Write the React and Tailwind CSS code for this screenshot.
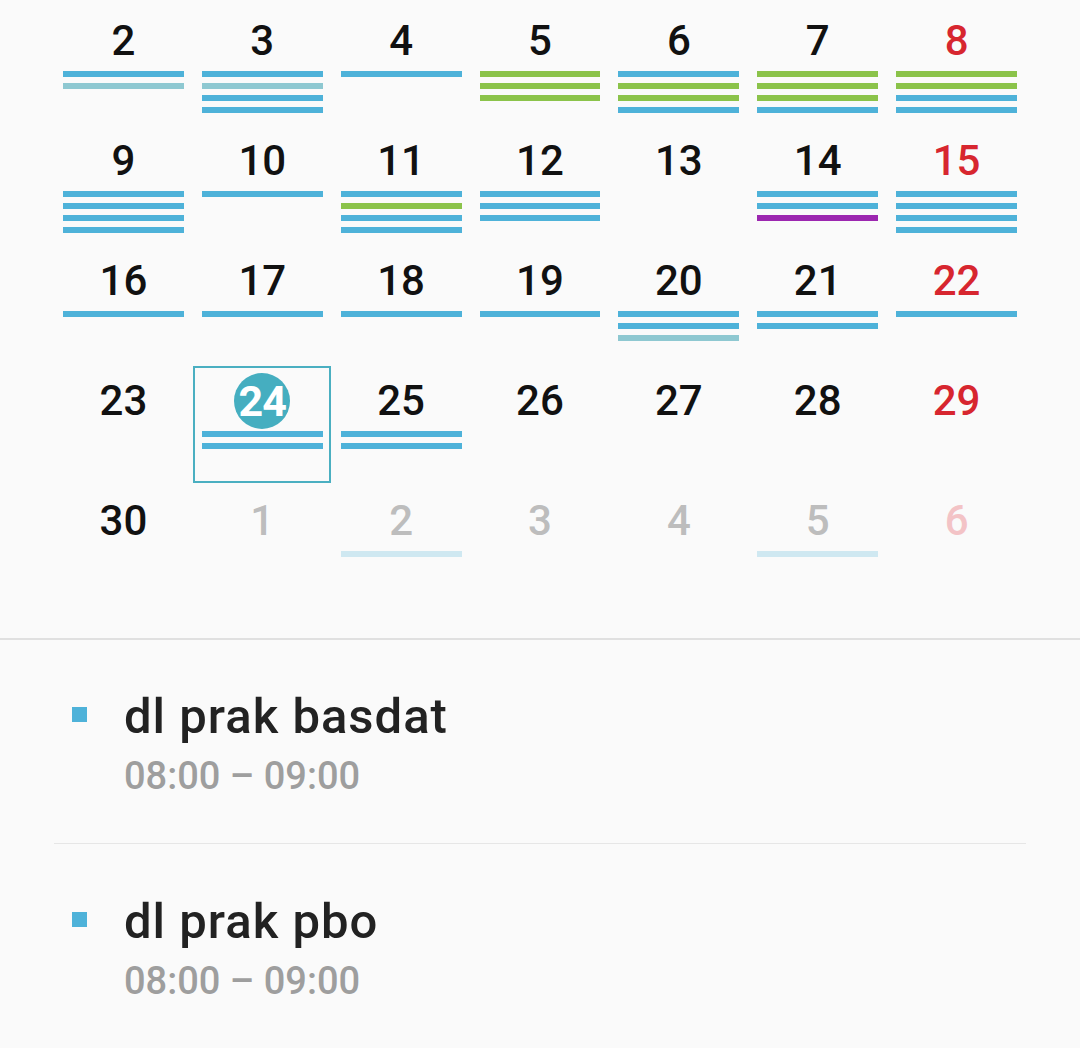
import React from "react";

const B = "bg-[#4eb2d9]";
const T = "bg-[#8ec8d1]";
const G = "bg-[#8bc34a]";
const P = "bg-[#9c27b0]";
const F = "bg-[#cfe8f1]";

const rows = [
  [
    { d: 2, bars: [B, T] },
    { d: 3, bars: [B, T, B, B] },
    { d: 4, bars: [B] },
    { d: 5, bars: [G, G, G] },
    { d: 6, bars: [B, G, G, B] },
    { d: 7, bars: [G, G, G, B] },
    { d: 8, bars: [G, G, B, B], red: true },
  ],
  [
    { d: 9, bars: [B, B, B, B] },
    { d: 10, bars: [B] },
    { d: 11, bars: [B, G, B, B] },
    { d: 12, bars: [B, B, B] },
    { d: 13, bars: [] },
    { d: 14, bars: [B, B, P] },
    { d: 15, bars: [B, B, B, B], red: true },
  ],
  [
    { d: 16, bars: [B] },
    { d: 17, bars: [B] },
    { d: 18, bars: [B] },
    { d: 19, bars: [B] },
    { d: 20, bars: [B, B, T] },
    { d: 21, bars: [B, B] },
    { d: 22, bars: [B], red: true },
  ],
  [
    { d: 23, bars: [] },
    { d: 24, bars: [B, B], selected: true },
    { d: 25, bars: [B, B] },
    { d: 26, bars: [] },
    { d: 27, bars: [] },
    { d: 28, bars: [] },
    { d: 29, bars: [], red: true },
  ],
  [
    { d: 30, bars: [] },
    { d: 1, bars: [], dim: true },
    { d: 2, bars: [F], dim: true },
    { d: 3, bars: [], dim: true },
    { d: 4, bars: [], dim: true },
    { d: 5, bars: [F], dim: true },
    { d: 6, bars: [], dim: true, red: true },
  ],
];

function Cell({ c }) {
  let color = "text-[#111111]";
  if (c.red && c.dim) color = "text-[#f3c3c6]";
  else if (c.red) color = "text-[#d7262f]";
  else if (c.dim) color = "text-[#bdbdbd]";
  return (
    <div className="relative h-[120px] flex flex-col items-center">
      {c.selected && (
        <div className="absolute top-[1px] left-0 right-[1px] h-[117px] border-2 border-[#4aafc1]" />
      )}
      <div className="mt-[11px] h-[50px] flex items-center justify-center">
        {c.selected ? (
          <div className="w-[56px] h-[56px] rounded-full bg-[#45aec0] flex items-center justify-center text-white text-[43px] font-bold leading-none tracking-[-1px]">
            {c.d}
          </div>
        ) : (
          <span className={`text-[42px] font-medium leading-none ${color}`}>{c.d}</span>
        )}
      </div>
      <div className="mt-[5px] w-full px-[9px] flex flex-col gap-[6px] relative">
        {c.bars.map((b, i) => (
          <div key={i} className={`h-[6px] w-full ${b}`} />
        ))}
      </div>
    </div>
  );
}

function Event({ title, time }) {
  return (
    <div className="flex items-start">
      <div className="w-[72px] shrink-0" />
      <div className="w-[15px] h-[15px] bg-[#4eb2d9] mt-[18px] shrink-0" />
      <div className="ml-[37px] flex flex-col">
        <div className="text-[49px] leading-[56px] font-medium tracking-[1px] text-[#222222]">{title}</div>
        <div className="mt-[7px] text-[38px] leading-[48px] font-medium text-[#9e9e9e]">{time}</div>
      </div>
    </div>
  );
}

export default function App() {
  return (
    <div
      className="w-[1080px] h-[1048px] bg-[#fafafa] overflow-hidden"
      style={{ fontFamily: "Roboto, 'Noto Sans', sans-serif" }}
    >
      <div className="pt-[5px] px-[54px]">
        {rows.map((r, i) => (
          <div key={i} className="grid grid-cols-7">
            {r.map((c, j) => (
              <Cell key={j} c={c} />
            ))}
          </div>
        ))}
      </div>
      <div className="mt-[33px] h-[2px] bg-[#e0e0e0]" />
      <div className="pt-[49px] pb-[43px]">
        <Event title="dl prak basdat" time="08:00 – 09:00" />
      </div>
      <div className="mx-[54px] h-px bg-[#e6e6e6]" />
      <div className="pt-[50px]">
        <Event title="dl prak pbo" time="08:00 – 09:00" />
      </div>
    </div>
  );
}
